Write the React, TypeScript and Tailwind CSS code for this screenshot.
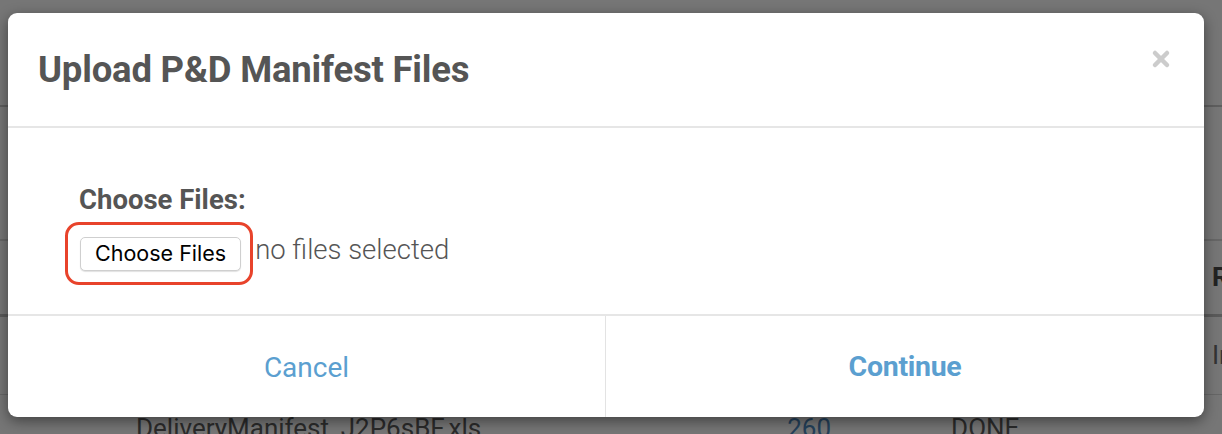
import { X } from 'lucide-react';

const font = { fontFamily: 'Roboto, "Liberation Sans", sans-serif' };

function BackgroundTable() {
  return (
    <div className="w-full h-[434px] bg-[#767676] text-[#2a2a2a] overflow-hidden" style={font}>
      <div className="h-[107px] border-b-2 border-[#5e5e5e]" />
      <div className="h-[134px] border-b-2 border-[#666]" />
      <div className="h-[76px] border-b-[3px] border-[#5a5a5a] flex items-center justify-end">
        <span className="text-[26px] font-bold text-[#222] w-[10px] overflow-hidden">R</span>
      </div>
      <div className="h-[78px] border-b border-[#666] flex items-center justify-end">
        <span className="text-[26px] text-[#333] w-[10px] overflow-hidden">In</span>
      </div>
      <div className="h-[40px] flex items-start text-[26px] text-[#2b2b2b] pt-[14px]">
        <span className="ml-[136px]">DeliveryManifest_J2P6sBF.xls</span>
        <span className="ml-[306px] text-[#24405a]">260</span>
        <span className="ml-[120px]">DONE</span>
      </div>
    </div>
  );
}

export default function App() {
  return (
    <div className="relative w-[1222px] h-[434px] overflow-hidden">
      <BackgroundTable />

      <div
        className="absolute left-[8px] top-[13px] w-[1196px] h-[404px] bg-white rounded-[9px] shadow-[0_4px_14px_rgba(0,0,0,0.45)] flex flex-col overflow-hidden"
        style={font}
      >
        <div className="h-[115px] border-b-2 border-[#e6e6e6] flex items-center justify-between pl-[30px] pr-[30px] shrink-0">
          <h2 className="text-[36.5px] font-bold text-[#555] tracking-[-0.2px] pt-[2px]">Upload P&amp;D Manifest Files</h2>
          <button className="text-[#cccccc] -mt-[22px] mr-[1px]">
            <X className="w-[24px] h-[24px]" strokeWidth={4.5} />
          </button>
        </div>

        <div className="h-[186px] shrink-0 pl-[71px] pt-[56px]">
          <label className="block text-[27.5px] font-bold text-[#555] leading-[32px]">Choose Files:</label>
          <div className="flex items-center mt-[6px]">
            <div className="-ml-[14px] rounded-[14px] border-[3px] border-[#e8432b] pt-[12px] pb-[11px] pl-[12px] pr-[9px]">
              <button className="h-[34px] px-[14px] bg-white border border-[#cfcfcf] rounded-[5px] shadow-[0_1px_1px_rgba(0,0,0,0.12)] text-[21.5px] text-black leading-none" style={{ fontFamily: 'Inter, "Liberation Sans", sans-serif' }}>
                Choose Files
              </button>
            </div>
            <span className="ml-[2px] -mt-[8px] text-[27.5px] font-light text-[#555]">no files selected</span>
          </div>
        </div>

        <div className="flex-1 border-t-2 border-[#e6e6e6] grid grid-cols-2">
          <button className="flex items-center justify-center text-[28px] text-[#5b9fd0] border-r border-[#e3e3e3] pt-[2px]">
            Cancel
          </button>
          <button className="flex items-center justify-center text-[28.5px] font-bold text-[#5b9fd0] tracking-[-0.3px] pt-[2px]">
            Continue
          </button>
        </div>
      </div>
    </div>
  );
}
